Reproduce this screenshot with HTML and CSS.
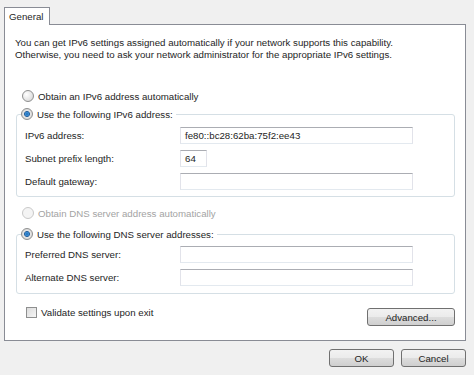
FILE: index.html
```html
<!DOCTYPE html>
<html lang="en">
<head>
    <meta charset="UTF-8">
    <title>IPv6 Properties</title>
    <link rel="stylesheet" href="styles.css">
</head>
<body>

<div class="dialog">
    <div class="tabs">
        <div class="tab">General</div>
    </div>

    <div class="panel">
        <p class="intro">You can get IPv6 settings assigned automatically if your network supports this capability.<br>
        Otherwise, you need to ask your network administrator for the appropriate IPv6 settings.</p>

        <label class="option first"><span class="radio"></span>Obtain an IPv6 address automatically</label>

        <fieldset class="group">
            <legend><span class="radio checked"></span>Use the following IPv6 address:</legend>
            <div class="row">
                <span class="label">IPv6 address:</span>
                <span class="field">fe80::bc28:62ba:75f2:ee43</span>
            </div>
            <div class="row">
                <span class="label">Subnet prefix length:</span>
                <span class="field short">64</span>
            </div>
            <div class="row">
                <span class="label">Default gateway:</span>
                <span class="field"></span>
            </div>
        </fieldset>

        <label class="option disabled"><span class="radio"></span>Obtain DNS server address automatically</label>

        <fieldset class="group dns">
            <legend><span class="radio checked"></span>Use the following DNS server addresses:</legend>
            <div class="row">
                <span class="label">Preferred DNS server:</span>
                <span class="field"></span>
            </div>
            <div class="row">
                <span class="label">Alternate DNS server:</span>
                <span class="field"></span>
            </div>
        </fieldset>

        <div class="bottom-row">
            <label class="check"><span class="box"></span>Validate settings upon exit</label>
            <button class="btn advanced">Advanced...</button>
        </div>
    </div>

    <div class="actions">
        <button class="btn">OK</button>
        <button class="btn">Cancel</button>
    </div>
</div>

</body>
</html>
```

FILE: styles.css
```css
body, html {
    margin: 0;
    height: 100%;
    background: #f0f0f0;
    color: #1e1e1e;
    font-family: "Liberation Sans", Arial, sans-serif;
    font-size: 9.7px;
    overflow: hidden;
}
.dialog {
    padding: 6px 8px 0 4px;
}
.tabs {
    display: flex;
    height: 18px;
}
.tab {
    width: 40px;
    border: 1px solid #898c95;
    border-bottom: none;
    background: #fff;
    padding-left: 4px;
    line-height: 17px;
    position: relative;
    top: 1px;
}
.panel {
    border: 1px solid #898c95;
    background: #fff;
    height: 315px;
    padding: 0 10px 0 11px;
}
.intro {
    margin: 12px 0 0 -1px;
    line-height: 12px;
}
.option {
    display: flex;
    align-items: center;
    height: 14px;
    margin-left: 6px;
}
.option.first {
    margin-top: 28px;
}
.option.disabled {
    margin-top: 9px;
    color: #a3a3a3;
}
.radio {
    width: 10px;
    height: 10px;
    border: 1px solid #8e8f8f;
    border-radius: 50%;
    background: radial-gradient(circle at 35% 35%, #fff 0, #e4e4e4 60%, #cfcfcf 100%);
    margin-right: 4px;
    flex: none;
}
.radio.checked {
    background: radial-gradient(circle, #1f6fb5 0, #3e8ed6 25%, #2a5f97 38%, #e6e6e6 45%, #cfcfcf 100%);
}
.option.disabled .radio {
    border-color: #c9c9c9;
    background: #f4f4f4;
}
.group {
    border: 1px solid #d5dfe5;
    border-radius: 3px;
    margin: 4px 0 0 0;
    padding: 3px 41px 3px 8px;
    min-width: 0;
}
.group legend {
    display: flex;
    align-items: center;
    padding: 0 3px 0 0;
    margin-left: -4px;
    height: 14px;
}
.group.dns {
    margin-top: 7px;
    padding-top: 2px;
    padding-bottom: 4px;
}
.row {
    display: flex;
    align-items: center;
    height: 23px;
}
.label {
    width: 155px;
    flex: none;
}
.field {
    flex: 1;
    height: 15px;
    border: 1px solid #e2e3ea;
    border-top-color: #abadb3;
    border-bottom-color: #e3e9ef;
    padding-left: 4px;
    line-height: 15px;
}
.field.short {
    flex: none;
    width: 21px;
}
.bottom-row {
    display: flex;
    align-items: flex-start;
    justify-content: space-between;
    margin-top: 14px;
}
.check {
    display: flex;
    align-items: center;
    margin: -1px 0 0 10px;
}
.box {
    width: 9px;
    height: 9px;
    border: 1px solid #8e8f8f;
    background: linear-gradient(135deg, #dcdcdc, #f6f6f6);
    margin-right: 4px;
}
.btn {
    font: inherit;
    color: #1e1e1e;
    height: 18px;
    border: 1px solid #707070;
    border-radius: 3px;
    background: linear-gradient(#f2f2f2 0, #ebebeb 50%, #dddddd 50%, #cfcfcf 100%);
    padding: 0;
    width: 65px;
}
.btn.advanced {
    width: 88px;
}
.actions {
    display: flex;
    justify-content: flex-end;
    gap: 7px;
    margin-top: 8px;
}
```
